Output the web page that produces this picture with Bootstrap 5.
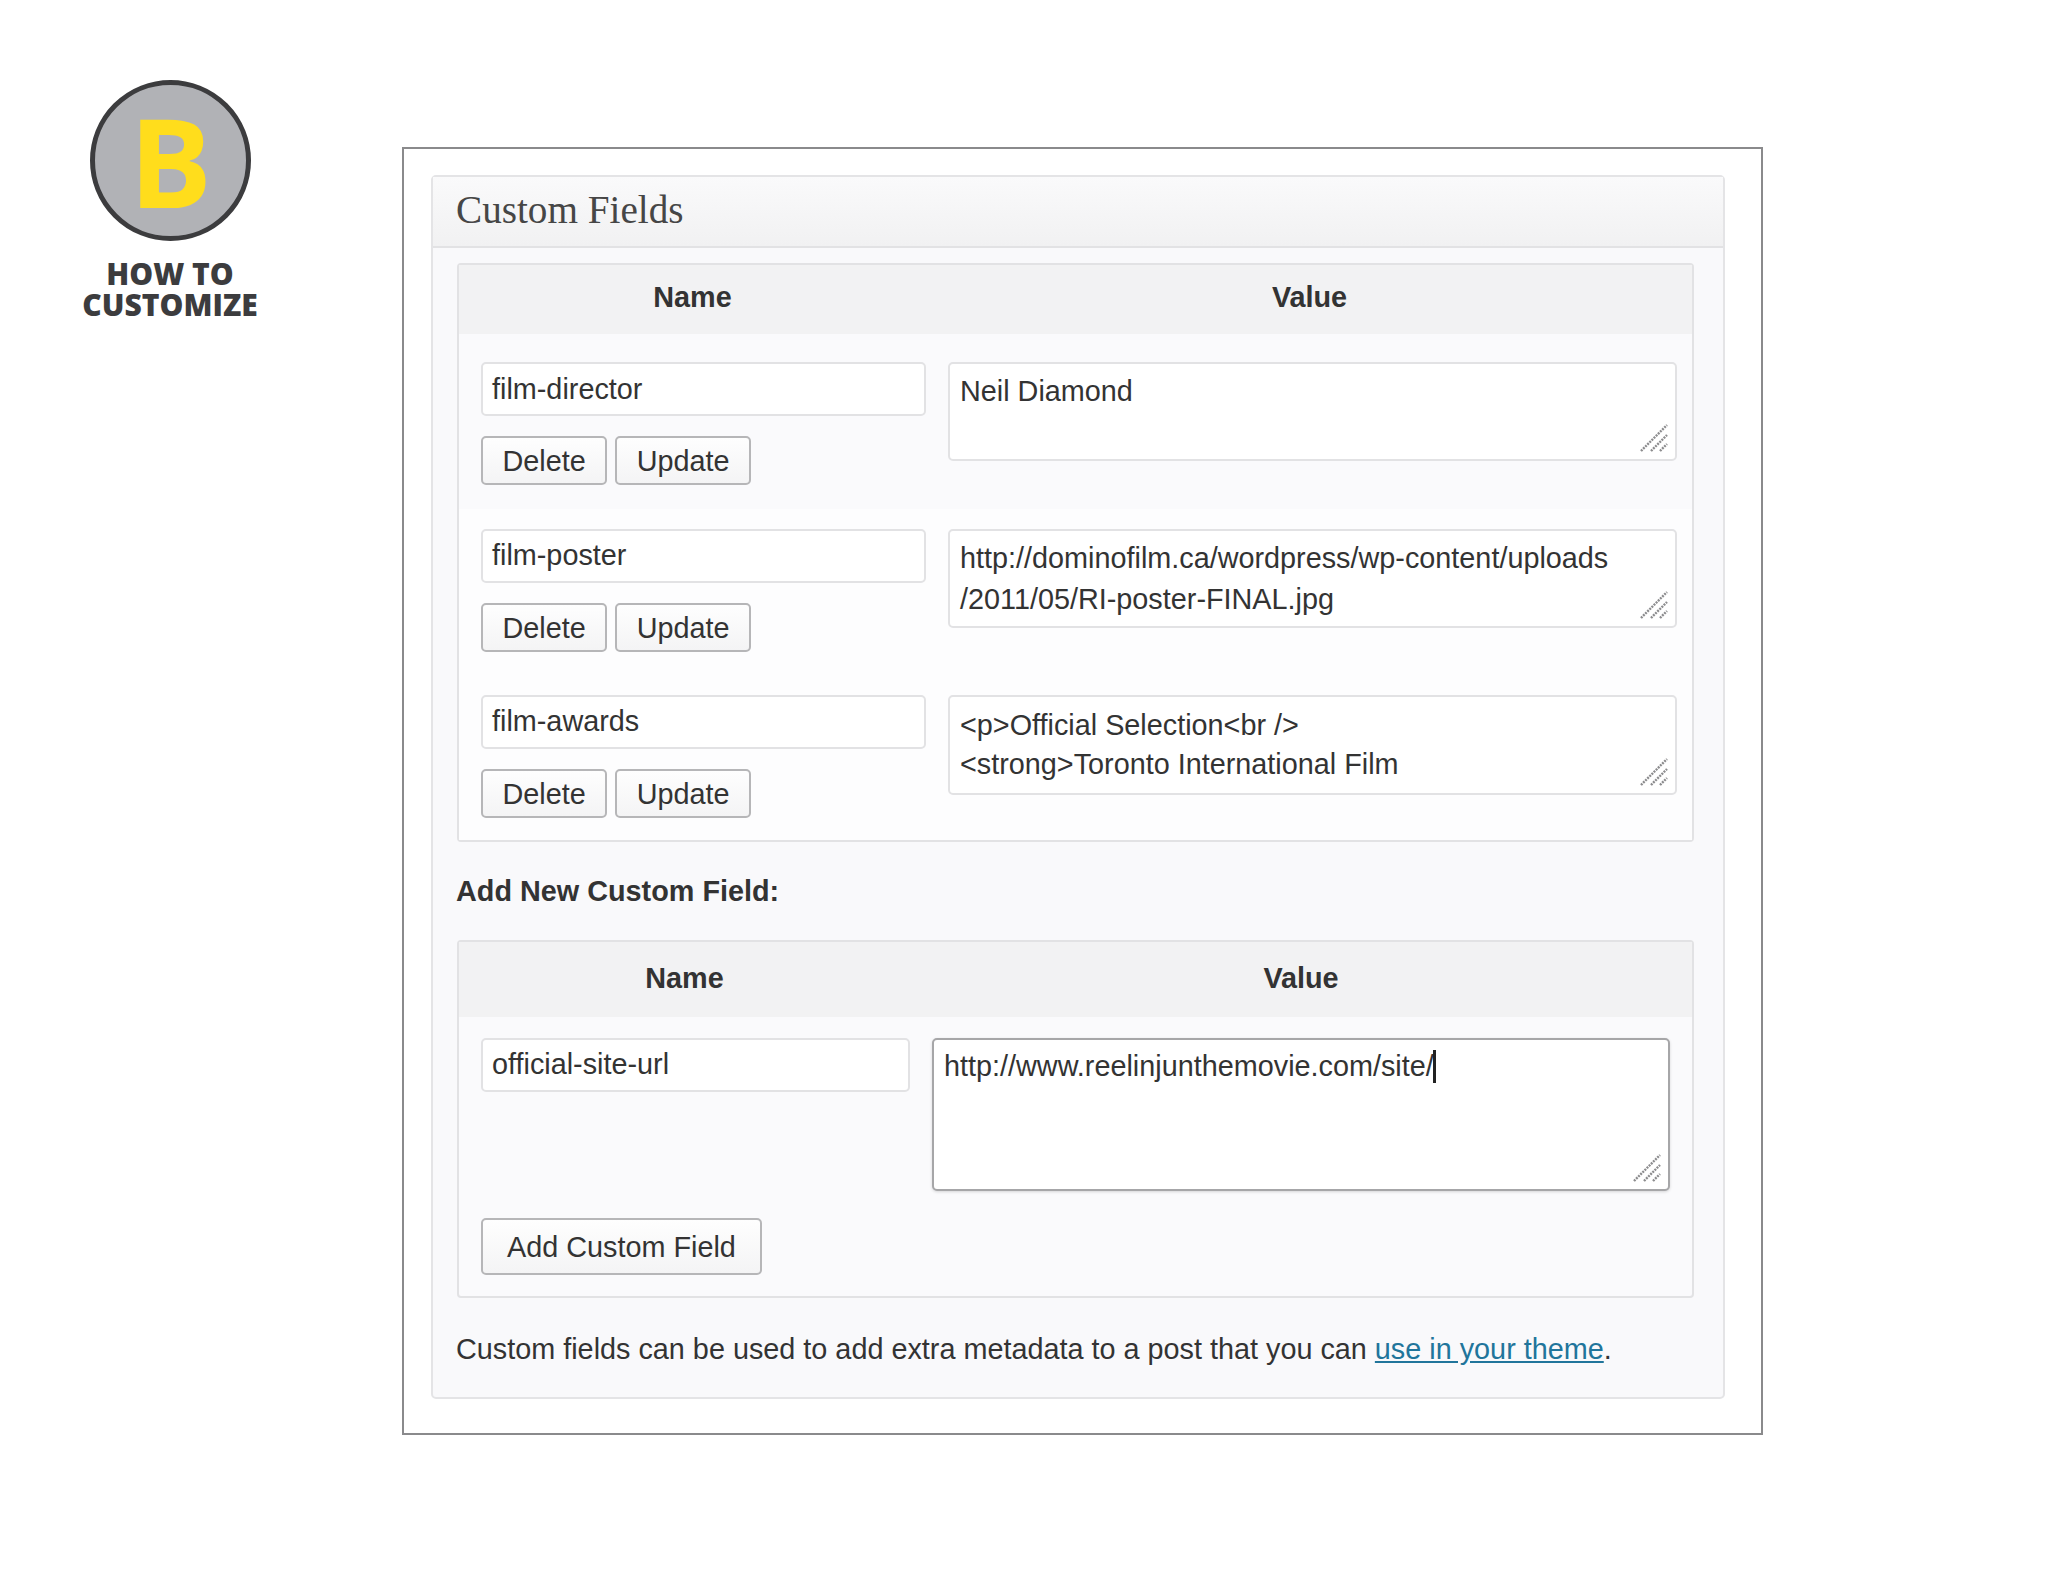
<!DOCTYPE html>
<html lang="en">
<head>
<meta charset="utf-8">
<title>Custom Fields</title>
<link href="https://cdn.jsdelivr.net/npm/bootstrap@5.3.0/dist/css/bootstrap.min.css" rel="stylesheet">
<style>
html,body{height:100%}
body{background:#fff;color:#333;font-family:"Liberation Sans",Arial,sans-serif;font-size:28.8px;line-height:1.4}
.page-wrap{width:2048px;height:1582px;padding:79px 0 0 81px}
.brand{width:178px;flex:none}
.brand-disc{width:161px;height:161px;margin:1px 0 0 9px;border:5px solid #3c3c3e;background:#b1b2b6;color:#ffdd1c;font-family:"Open Sans","Noto Sans",sans-serif;font-weight:700;font-size:123px;line-height:123px}
.brand-text{font-family:"Open Sans","Noto Sans",sans-serif;font-weight:800;font-size:30px;line-height:31px;height:31px;overflow:visible;color:#3c3c3e;white-space:nowrap}
.brand-text-first{margin-top:17px}
.frame{width:1361px;height:1288px;border:2px solid #8a8a8c;margin:68px 0 0 143px;padding:26px 36px 0 27px;flex:none}
.panel-box{border:2px solid #e4e4e6;border-radius:5px;background:#f9f9fb;height:1224px}
.panel-head{height:71px;background:linear-gradient(#fafafb,#f1f1f2);border-bottom:2px solid #e2e2e4;padding:0 0 0 23px;font-family:"Liberation Serif",serif;font-size:39.2px;color:#464646;line-height:66px}
.panel-content{padding:15px 29px 0 24px}
.field-table{border:2px solid #e2e2e4;border-radius:4px;background:#fafafc}
.field-head{height:69px;padding-bottom:5px;background:#f2f2f3;font-weight:700;color:#333;align-items:center}
.head-name{width:467px;text-align:center;flex:none}
.head-value{flex:1;text-align:center;padding-left:1px}
.field-row{padding:0 0 0 22px}
.row-a{height:175px;padding-top:28px}
.row-b{height:165px;padding-top:20px;background:#fdfdfe}
.row-c{height:166px;padding-top:21px;background:#fdfdfe}
.col-name{width:445px;flex:none}
.col-value{width:729px;margin-left:22px;flex:none}
.fake-input{height:54px;padding:0 10px 0 9px;border:2px solid #e2e2e4;border-radius:5px;background:#fff;color:#333;font-size:28.8px;line-height:49px;box-shadow:none}
.row-a .fake-input{line-height:51px}
.fake-area{height:99px;padding:7px 10px 0;border:2px solid #e2e2e4;border-radius:5px;background:#fff;color:#333;font-size:28.8px;line-height:40.5px;box-shadow:none;white-space:nowrap;overflow:hidden}
.row-c .fake-area{height:100px;line-height:39px;padding-top:9px}
.wp-btn{height:49px;padding:0 19.5px;font-size:28.8px;line-height:44px;color:#333;background:linear-gradient(#fefefe,#f4f4f5);border:2px solid #b6b6b8;border-radius:5px;margin-top:20px}
.grip{position:absolute;right:9px;bottom:9px;display:block}
.add-title{font-weight:700;height:0;line-height:0;margin:49px 0 49px -1px}
.add-table{height:358px}
.add-table .field-head{height:75px;padding-bottom:2px}
.add-table .head-name{width:451px}
.add-table .head-value{padding-left:0}
.add-row{padding:21px 0 0 22px}
.add-name{width:429px;flex:none}
.add-value{width:738px;margin-left:22px;flex:none}
.add-value .fake-area{height:153px;border-color:#a6a6a8;box-shadow:0 1px 3px rgba(0,0,0,.15);padding-top:6px}
.add-btn{height:57px;padding:0 24px;line-height:55px;margin:27px 0 0 22px}
.caret-mark{display:inline-block;width:3px;height:33px;background:#222;vertical-align:-7px;margin-left:-1px}
.note{margin:31px 0 0 -1px;height:40px;line-height:40px;white-space:nowrap}
.note a{color:#21759b}
</style>
</head>
<body>
<div class="page-wrap d-flex align-items-start">
  <div class="brand text-center">
    <div class="brand-disc rounded-circle d-flex align-items-center justify-content-center">B</div>
    <div class="brand-text brand-text-first">HOW TO</div>
    <div class="brand-text">CUSTOMIZE</div>
  </div>
  <div class="frame">
    <div class="panel-box">
      <div class="panel-head">Custom Fields</div>
      <div class="panel-content">
        <div class="field-table">
          <div class="field-head d-flex"><div class="head-name">Name</div><div class="head-value">Value</div></div>
          <div class="field-row row-a d-flex align-items-start">
            <div class="col-name">
              <div class="form-control fake-input">film-director</div>
              <div class="d-flex gap-2"><button class="btn wp-btn">Delete</button><button class="btn wp-btn">Update</button></div>
            </div>
            <div class="col-value position-relative">
              <div class="form-control fake-area">Neil Diamond</div>
              <svg class="grip" width="28" height="28" viewBox="0 0 28 28" stroke="#8c8c8e" stroke-width="2.4" stroke-dasharray="2 1"><path d="M1 27 27 1M11 27 27 11M20 27 27 20"/></svg>
            </div>
          </div>
          <div class="field-row row-b d-flex align-items-start">
            <div class="col-name">
              <div class="form-control fake-input">film-poster</div>
              <div class="d-flex gap-2"><button class="btn wp-btn">Delete</button><button class="btn wp-btn">Update</button></div>
            </div>
            <div class="col-value position-relative">
              <div class="form-control fake-area">http://dominofilm.ca/wordpress/wp-content/uploads<br>/2011/05/RI-poster-FINAL.jpg</div>
              <svg class="grip" width="28" height="28" viewBox="0 0 28 28" stroke="#8c8c8e" stroke-width="2.4" stroke-dasharray="2 1"><path d="M1 27 27 1M11 27 27 11M20 27 27 20"/></svg>
            </div>
          </div>
          <div class="field-row row-c d-flex align-items-start">
            <div class="col-name">
              <div class="form-control fake-input">film-awards</div>
              <div class="d-flex gap-2"><button class="btn wp-btn">Delete</button><button class="btn wp-btn">Update</button></div>
            </div>
            <div class="col-value position-relative">
              <div class="form-control fake-area">&lt;p&gt;Official Selection&lt;br /&gt;<br>&lt;strong&gt;Toronto International Film</div>
              <svg class="grip" width="28" height="28" viewBox="0 0 28 28" stroke="#8c8c8e" stroke-width="2.4" stroke-dasharray="2 1"><path d="M1 27 27 1M11 27 27 11M20 27 27 20"/></svg>
            </div>
          </div>
        </div>
        <div class="add-title">Add New Custom Field:</div>
        <div class="field-table add-table">
          <div class="field-head d-flex"><div class="head-name">Name</div><div class="head-value">Value</div></div>
          <div class="add-row d-flex align-items-start">
            <div class="add-name"><div class="form-control fake-input">official-site-url</div></div>
            <div class="add-value position-relative">
              <div class="form-control fake-area">http://www.reelinjunthemovie.com/site/<span class="caret-mark"></span></div>
              <svg class="grip" width="28" height="28" viewBox="0 0 28 28" stroke="#8c8c8e" stroke-width="2.4" stroke-dasharray="2 1"><path d="M1 27 27 1M11 27 27 11M20 27 27 20"/></svg>
            </div>
          </div>
          <button class="btn wp-btn add-btn">Add Custom Field</button>
        </div>
        <p class="note">Custom fields can be used to add extra metadata to a post that you can <a href="#">use in your theme</a>.</p>
      </div>
    </div>
  </div>
</div>
<script src="https://cdn.jsdelivr.net/npm/bootstrap@5.3.0/dist/js/bootstrap.bundle.min.js"></script>
</body>
</html>
